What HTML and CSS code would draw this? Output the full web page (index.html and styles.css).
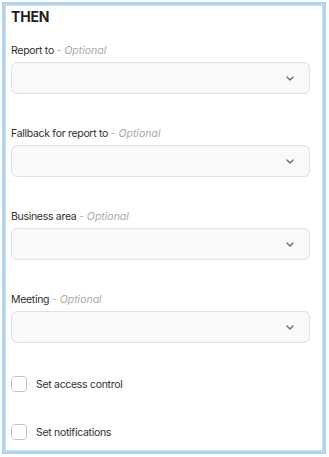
FILE: index.html
```html
<!DOCTYPE html>
<html lang="en">
<head>
    <meta charset="UTF-8">
    <meta name="viewport" content="width=device-width, initial-scale=1.0">
    <title>Then</title>
    <link rel="stylesheet" href="styles.css">
</head>
<body>
    <div class="panel">
        <h2 class="panel-title">THEN</h2>

        <div class="field">
            <label class="field-label">Report to <span class="optional">- Optional</span></label>
            <div class="select-box">
                <svg class="chevron" width="8" height="5" viewBox="0 0 8 5"><path d="M1 1 L4 4 L7 1" fill="none" stroke="#5f6368" stroke-width="1.2" stroke-linecap="round" stroke-linejoin="round"/></svg>
            </div>
        </div>

        <div class="field">
            <label class="field-label">Fallback for report to <span class="optional">- Optional</span></label>
            <div class="select-box">
                <svg class="chevron" width="8" height="5" viewBox="0 0 8 5"><path d="M1 1 L4 4 L7 1" fill="none" stroke="#5f6368" stroke-width="1.2" stroke-linecap="round" stroke-linejoin="round"/></svg>
            </div>
        </div>

        <div class="field">
            <label class="field-label">Business area <span class="optional">- Optional</span></label>
            <div class="select-box">
                <svg class="chevron" width="8" height="5" viewBox="0 0 8 5"><path d="M1 1 L4 4 L7 1" fill="none" stroke="#5f6368" stroke-width="1.2" stroke-linecap="round" stroke-linejoin="round"/></svg>
            </div>
        </div>

        <div class="field">
            <label class="field-label">Meeting <span class="optional">- Optional</span></label>
            <div class="select-box">
                <svg class="chevron" width="8" height="5" viewBox="0 0 8 5"><path d="M1 1 L4 4 L7 1" fill="none" stroke="#5f6368" stroke-width="1.2" stroke-linecap="round" stroke-linejoin="round"/></svg>
            </div>
        </div>

        <div class="check-row">
            <span class="check-box"></span>
            <span class="check-label">Set access control</span>
        </div>
        <div class="check-row">
            <span class="check-box"></span>
            <span class="check-label">Set notifications</span>
        </div>
    </div>
</body>
</html>
```

FILE: styles.css
```css
* {
    box-sizing: border-box;
}
body {
    margin: 0;
    background: #ffffff;
    font-family: 'Inter', sans-serif;
    color: #2e2e2e;
}
.panel {
    margin: 2px 3px 3px 2px;
    height: 452px;
    border: 3px solid #b3d3ea;
    box-shadow: inset 0 0 0 1px #cfe3f2;
    padding: 3px 13px 0 6px;
}
.panel-title {
    margin: 0;
    font-size: 14px;
    line-height: 18px;
    font-weight: 700;
    color: #1f1f1f;
    letter-spacing: -0.2px;
}
.field {
    margin-top: 18px;
}
.field + .field {
    margin-top: 33px;
}
.field-label {
    display: block;
    font-size: 10.5px;
    line-height: 14px;
    letter-spacing: -0.3px;
    color: #2e2e2e;
    margin-bottom: 4px;
}
.optional {
    color: #a9a9a9;
    font-style: italic;
    letter-spacing: 0;
}
.select-box {
    height: 32px;
    border: 1px solid #dde1e6;
    border-radius: 6px;
    background-color: #f8f9fb;
    display: flex;
    align-items: center;
    justify-content: flex-end;
    padding-right: 15px;
}
.chevron {
    display: block;
}
.check-row {
    display: flex;
    align-items: center;
    gap: 9px;
    margin-top: 33px;
}
.check-row + .check-row {
    margin-top: 32px;
}
.check-box {
    width: 16px;
    height: 16px;
    border: 1px solid #c4c8ce;
    border-radius: 4px;
    background: #ffffff;
}
.check-label {
    font-size: 10.5px;
    letter-spacing: -0.3px;
    color: #2e2e2e;
}
```
